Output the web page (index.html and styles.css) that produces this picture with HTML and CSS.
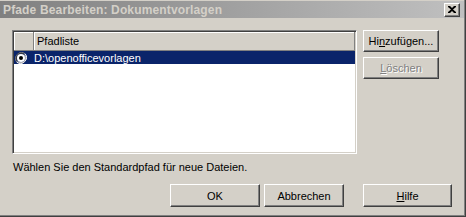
FILE: index.html
```html
<!DOCTYPE html>
<html>
<head>
<meta charset="utf-8">
<link rel="stylesheet" href="styles.css">
</head>
<body>
<div class="window">
  <div class="titlebar">
    <span class="title">Pfade Bearbeiten: Dokumentvorlagen</span>
    <span class="close"><svg width="8" height="7" viewBox="0 0 8 7"><path d="M0 0h2l2 2 2-2h2v1L5 3.5 8 6v1H6L4 5 2 7H0V6l3-2.5L0 1z" fill="#000"/></svg></span>
  </div>
  <div class="content">
    <div class="main">
      <div class="listbox">
        <div class="header">
          <div class="hcell first"></div>
          <div class="hcell second">Pfadliste</div>
        </div>
        <div class="row selected">
          <span class="radio"><svg width="12" height="12" viewBox="0 0 12 12">
            <path d="M10.2 1.8A6 6 0 0 0 1.8 10.2" fill="none" stroke="#808080" stroke-width="1"/>
            <path d="M9.4 2.6A4.8 4.8 0 0 0 2.6 9.4" fill="none" stroke="#404040" stroke-width="1"/>
            <path d="M1.8 10.2A6 6 0 0 0 10.2 1.8" fill="none" stroke="#ffffff" stroke-width="1"/>
            <path d="M2.6 9.4A4.8 4.8 0 0 0 9.4 2.6" fill="none" stroke="#d4d0c8" stroke-width="1"/>
            <circle cx="6" cy="6" r="4" fill="#fff"/>
            <circle cx="6" cy="6" r="2" fill="#000"/>
          </svg></span>
          <span class="path">D:\openofficevorlagen</span>
        </div>
      </div>
      <div class="side">
        <button class="btn side-btn">Hi<u>n</u>zufügen...</button>
        <button class="btn side-btn disabled"><u>L</u>öschen</button>
      </div>
    </div>
    <div class="hint">Wählen Sie den Standardpfad für neue Dateien.</div>
    <div class="footer">
      <button class="btn ok">OK</button>
      <button class="btn cancel">Abbrechen</button>
      <button class="btn help"><u>H</u>ilfe</button>
    </div>
  </div>
</div>
</body>
</html>
```

FILE: styles.css
```css
html, body {
  margin: 0;
  padding: 0;
  background: #d4d0c8;
}
.window {
  width: 466px;
  height: 217px;
  box-sizing: border-box;
  background: #d4d0c8;
  border-right: 1px solid #404040;
  border-bottom: 1px solid #404040;
  box-shadow: inset -1px -1px #808080;
  padding-top: 1px;
  font-family: "Liberation Sans", Arial, sans-serif;
  font-size: 11px;
  color: #000;
  display: flex;
  flex-direction: column;
}
.titlebar {
  height: 17px;
  margin-right: 1px;
  background: linear-gradient(to right, #808080, #c0c0c0);
  display: flex;
  align-items: center;
  justify-content: space-between;
  padding-left: 3px;
  padding-right: 4px;
}
.title {
  font-weight: bold;
  color: #d4d0c8;
  font-size: 12px;
  letter-spacing: 0.15px;
}
.close {
  width: 16px;
  height: 14px;
  box-sizing: border-box;
  background: #d4d0c8;
  border: 1px solid;
  border-color: #fff #404040 #404040 #fff;
  box-shadow: inset -1px -1px #808080;
  display: flex;
  align-items: center;
  justify-content: center;
  padding-right: 1px;
}
.close svg { display: block; }
.content {
  padding: 12px 0 0 12px;
  display: flex;
  flex-direction: column;
}
.main {
  display: flex;
  gap: 6px;
}
.listbox {
  width: 345px;
  height: 124px;
  box-sizing: border-box;
  background: #fff;
  border: 1px solid;
  border-color: #808080 #fff #fff #808080;
  box-shadow: inset 1px 1px #404040, inset -1px -1px #d4d0c8;
  padding: 1px;
}
.header {
  display: flex;
  height: 19px;
  background: #d4d0c8;
}
.hcell {
  box-sizing: border-box;
  height: 19px;
  border-right: 1px solid #808080;
  border-bottom: 1px solid #808080;
  box-shadow: inset 1px 1px #fff;
  display: flex;
  align-items: center;
}
.hcell.first { width: 20px; }
.hcell.second {
  flex: 1;
  padding-left: 3px;
}
.row {
  height: 13px;
  display: flex;
  align-items: center;
}
.row.selected {
  background: #0a246a;
  color: #fff;
}
.radio {
  width: 19px;
  padding-left: 1px;
  display: flex;
  align-items: center;
}
.radio svg { display: block; }
.path { padding-left: 0px; }
.side {
  display: flex;
  flex-direction: column;
  gap: 5px;
}
.btn {
  font-family: "Liberation Sans", Arial, sans-serif;
  font-size: 11px;
  color: #000;
  background: #d4d0c8;
  box-sizing: border-box;
  border: 1px solid;
  border-color: #fff #404040 #404040 #fff;
  box-shadow: inset -1px -1px #808080;
  padding: 0;
  margin: 0;
  height: 22px;
}
.side-btn { width: 76px; }
.btn.disabled {
  color: #808080;
  text-shadow: 1px 1px #fff;
}
.hint {
  margin-top: 7px;
  padding-left: 1px;
  line-height: 13px;
}
.footer {
  display: flex;
  margin-top: 10px;
  padding-left: 158px;
}
.footer .btn { height: 23px; }
.ok { width: 90px; }
.cancel { width: 80px; margin-left: 4px; }
.help { width: 89px; margin-left: 19px; }
```
